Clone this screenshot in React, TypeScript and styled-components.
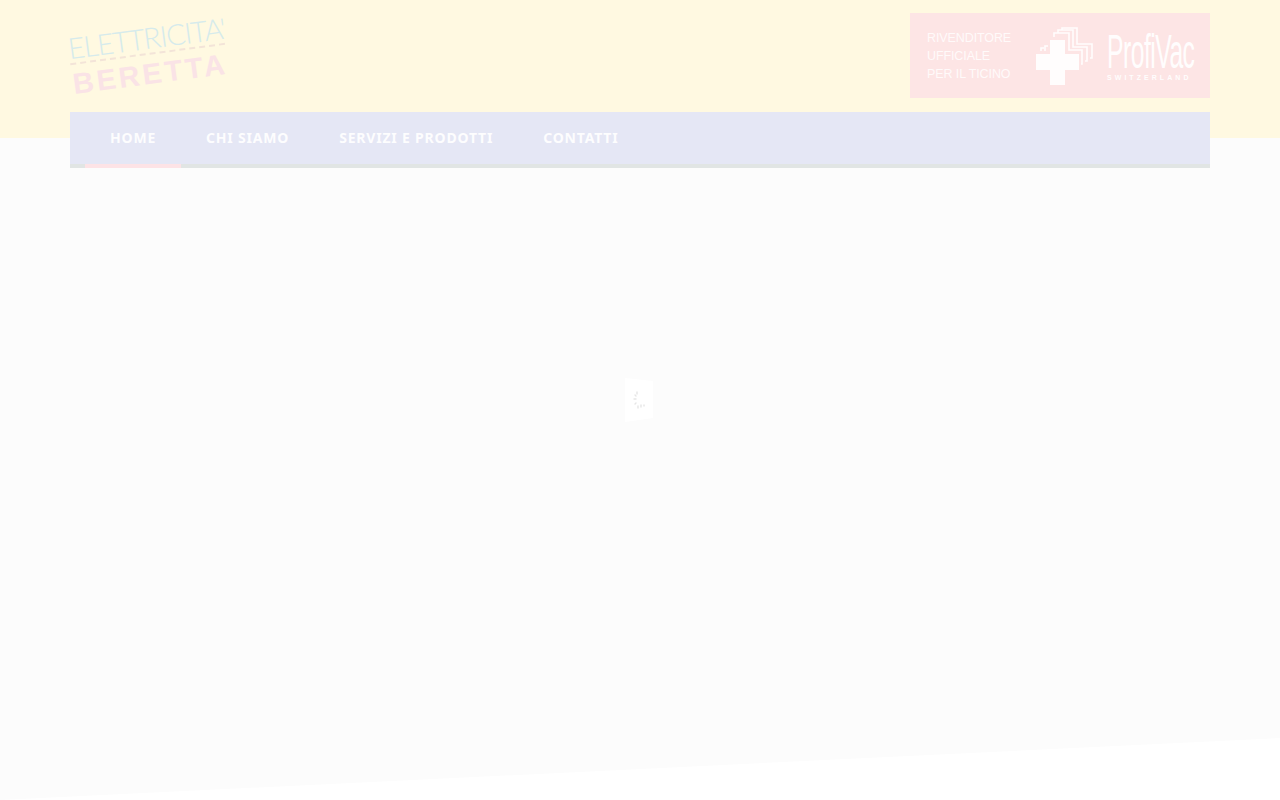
import styled, { createGlobalStyle } from "styled-components";

const GlobalStyle = createGlobalStyle`
  html, body {
    margin: 0;
    padding: 0;
    background: #fcfcfc;
  }
`;

const Page = styled.div`
  display: flex;
  flex-direction: column;
  height: 800px;
  overflow: hidden;
  background: linear-gradient(#fff9e1 0, #fff9e1 138px, #fcfcfc 138px);
  font-family: "Noto Sans", "Liberation Sans", sans-serif;
`;

const Container = styled.div`
  width: 1140px;
  margin: 0 auto;
`;

const HeaderRow = styled.header`
  display: flex;
  height: 112px;
  justify-content: space-between;
  align-items: flex-start;
`;

const Logo = styled.div`
  display: flex;
  flex-direction: column;
  width: 156px;
  margin-top: 23px;
  transform: rotate(-7.5deg);
  transform-origin: 50% 50%;
`;

const LogoTop = styled.span`
  display: block;
  border-bottom: 2px dashed #f3e4d8;
  color: #d6ebec;
  font-family: "Lato", "Liberation Sans", sans-serif;
  font-size: 29px;
  font-weight: 300;
  line-height: 30px;
  letter-spacing: -1.2px;
  white-space: nowrap;
`;

const LogoBottom = styled.span`
  margin-top: 2px;
  color: #fae3e6;
  font-family: "Liberation Sans", sans-serif;
  font-size: 29px;
  font-weight: 700;
  line-height: 34px;
  letter-spacing: 3px;
  white-space: nowrap;
`;

const Banner = styled.div`
  display: flex;
  width: 300px;
  height: 85px;
  margin-top: 13px;
  padding: 0 17px;
  box-sizing: border-box;
  align-items: center;
  background: #fde5e5;
  color: #fffdfd;
`;

const BannerText = styled.div`
  width: 108px;
  flex: none;
  color: #fffafa;
  font-family: "Liberation Sans", sans-serif;
  font-size: 12.5px;
  line-height: 18px;
  letter-spacing: -0.1px;
`;

const CrossIcon = styled.svg`
  display: block;
  width: 60px;
  height: 60px;
  flex: none;
  margin-top: 2px;
`;

const Brand = styled.div`
  display: flex;
  width: 86px;
  flex: none;
  flex-direction: column;
  margin-left: 12px;
  align-items: flex-start;
`;

const BrandName = styled.span`
  transform: scaleX(0.515);
  transform-origin: 0 50%;
  font-family: "Liberation Sans", sans-serif;
  font-size: 48px;
  line-height: 44px;
  letter-spacing: -1px;
  white-space: nowrap;
`;

const BrandSub = styled.span`
  font-family: "Liberation Sans", sans-serif;
  font-size: 7px;
  font-weight: 700;
  line-height: 8px;
  letter-spacing: 3.05px;
  white-space: nowrap;
`;

const Nav = styled.nav`
  display: flex;
  height: 52px;
  padding-left: 15px;
  border-bottom: 4px solid #e1e5e4;
  background: #e5e7f5;
`;

const NavItem = styled.a<{ $active?: boolean }>`
  height: 52px;
  padding: 0 25px;
  border-bottom: 4px solid ${(p) => (p.$active ? "#fde3e6" : "transparent")};
  color: #fdfdfe;
  font-size: 14px;
  font-weight: 700;
  line-height: 51px;
  letter-spacing: 0.8px;
  text-decoration: none;
  white-space: nowrap;
`;

const Main = styled.main`
  display: flex;
  flex: 1;
  justify-content: center;
  align-items: center;
  padding: 0 2px 0 0;
`;

const Loader = styled.div`
  display: flex;
  width: 28px;
  height: 44px;
  margin-top: -106px;
  justify-content: center;
  align-items: center;
  background: #ffffff;
  clip-path: polygon(0 0, 100% 7%, 100% 91%, 0 100%);
`;

const Wedge = styled.div`
  height: 62px;
  flex: none;
  background: #ffffff;
  clip-path: polygon(0 100%, 100% 0, 100% 100%);
`;

const navItems = ["HOME", "CHI SIAMO", "SERVIZI E PRODOTTI", "CONTATTI"];

export default function App() {
  return (
    <Page>
      <GlobalStyle />
      <Container>
        <HeaderRow>
          <Logo>
            <LogoTop>ELETTRICITA'</LogoTop>
            <LogoBottom>BERETTA</LogoBottom>
          </Logo>
          <Banner>
            <BannerText>
              RIVENDITORE
              <br />
              UFFICIALE
              <br />
              PER IL TICINO
            </BannerText>
            <CrossIcon viewBox="0 0 60 60">
              <path
                fill="#fffdfd"
                d="M15 13h15v14h14v16H30v15H15V43H1V27h14z"
              />
              <path
                fill="none"
                stroke="#fffdfd"
                strokeWidth="1.6"
                d="M19 10V6h15v17h13v14h-1M23 6V3h15v17h14v14h-2M27 3V1h15v16h15v14h-2M10 24v-5h3M6 24v-3h3"
              />
            </CrossIcon>
            <Brand>
              <BrandName>ProfiVac</BrandName>
              <BrandSub>SWITZERLAND</BrandSub>
            </Brand>
          </Banner>
        </HeaderRow>
        <Nav>
          {navItems.map((item, index) => (
            <NavItem key={item} href="#" $active={index === 0}>
              {item}
            </NavItem>
          ))}
        </Nav>
      </Container>
      <Main>
        <Loader>
          <svg width="14" height="20" viewBox="0 0 14 20">
            <g fill="none" stroke="#e6e6e6" strokeWidth="1.4" strokeLinecap="round">
              <path d="M5 2v2M3 5l1 1M2 9h2M3 14l1-1" />
              <path d="M6 16v2M9 15v2M12 15v1" />
            </g>
          </svg>
        </Loader>
      </Main>
      <Wedge />
    </Page>
  );
}
